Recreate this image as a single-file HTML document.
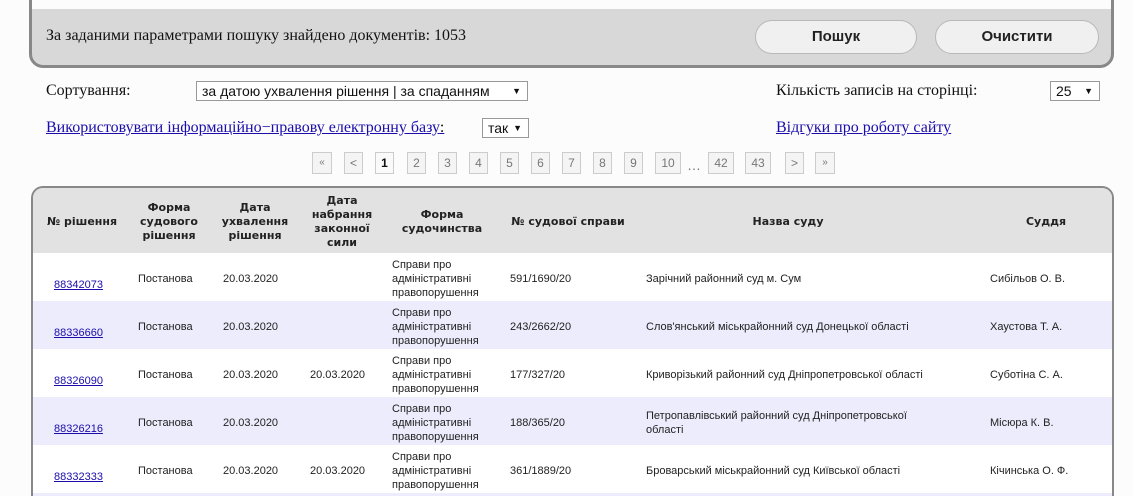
<!DOCTYPE html>
<html><head><meta charset="utf-8"><style>
*{margin:0;padding:0;box-sizing:border-box}
html,body{width:1133px;height:496px;overflow:hidden}
body{background:#fcfcfc;position:relative;font-family:"Liberation Serif",serif;color:#111}
.a{position:absolute}
.panel{left:29px;top:-20px;width:1085px;height:88px;border:3px solid #888;border-radius:0 0 14px 14px;background:#d8d8d8;overflow:hidden}
.panel .w{position:absolute;left:0;top:0;right:0;height:26px;background:#fcfcfc}
.btn{top:20px;height:34px;border:1px solid #b8b8b8;border-radius:17px;background:#f0f0f0;font:bold 15px "Liberation Sans",sans-serif;text-align:center;line-height:32px;color:#222}
.sel{border:1px solid #999;background:#fff;font:14px "Liberation Sans",sans-serif;padding-left:5px;line-height:18px;color:#111}
.sel span{position:absolute;right:6px;top:0;font-size:9px}
a,.lnk{color:#1a0dab;text-decoration:underline}
.t{font-size:16px}
.pg{top:152px;height:22px;border:1px solid #ccc;background:#f4f4f4;font:12px "Liberation Sans",sans-serif;color:#777;text-align:center;line-height:20px}
.tbl{left:31px;top:186px;width:1083px;height:310px;border:2px solid #888;border-bottom:0;border-radius:12px 12px 0 0;overflow:hidden;background:#fff}
.in{position:absolute;left:-2px;top:-2px;width:1083px;height:310px}
.hd{position:absolute;left:0;top:0;right:0;height:67px;background:#e2e2e2}
.r{position:absolute;left:0;right:0;height:48px}
.alt{background:#ececfc}
.h{font:bold 11px "DejaVu Sans",sans-serif;text-align:center;line-height:14px;color:#222;position:absolute;transform:translateX(-50%);white-space:nowrap}
.c{font:11px "Liberation Sans",sans-serif;color:#222;position:absolute;line-height:14px;white-space:nowrap}
</style></head><body>
<div class="a panel"><div class="w"></div></div>
<div class="a t" style="left:46px;top:27px">За заданими параметрами пошуку знайдено документів: 1053</div>
<div class="a btn" style="left:755px;width:162px">Пошук</div>
<div class="a btn" style="left:935px;width:164px">Очистити</div>

<div class="a t" style="left:46px;top:82px">Сортування:</div>
<div class="a sel" style="left:196px;top:81px;width:332px;height:20px">за датою ухвалення рішення | за спаданням<span>▼</span></div>
<div class="a t" style="left:776px;top:82px">Кількість записів на сторінці:</div>
<div class="a sel" style="left:1050px;top:81px;width:50px;height:20px">25<span>▼</span></div>
<div class="a lnk t" style="left:46px;top:119px">Використовувати інформаційно−правову електронну базу<span style="color:#111;text-decoration:none">:</span></div>
<div class="a sel" style="left:482px;top:118px;width:47px;height:20px">так<span>▼</span></div>
<div class="a lnk t" style="left:776px;top:119px">Відгуки про роботу сайту</div>

<div class="a pg" style="left:312px;width:20px;font-size:10px">«</div>
<div class="a pg" style="left:344px;width:19px">&lt;</div>
<div class="a pg" style="left:375px;width:19px;color:#111;font-weight:bold;background:#fafafa">1</div>
<div class="a pg" style="left:407px;width:19px">2</div>
<div class="a pg" style="left:438px;width:19px">3</div>
<div class="a pg" style="left:469px;width:19px">4</div>
<div class="a pg" style="left:500px;width:19px">5</div>
<div class="a pg" style="left:531px;width:19px">6</div>
<div class="a pg" style="left:562px;width:19px">7</div>
<div class="a pg" style="left:593px;width:19px">8</div>
<div class="a pg" style="left:624px;width:19px">9</div>
<div class="a pg" style="left:655px;width:26px">10</div>
<div class="a" style="left:687px;top:157px;font:14px 'Liberation Sans',sans-serif;color:#777">…</div>
<div class="a pg" style="left:708px;width:26px">42</div>
<div class="a pg" style="left:745px;width:26px">43</div>
<div class="a pg" style="left:785px;width:19px">&gt;</div>
<div class="a pg" style="left:815px;width:20px;font-size:10px">»</div>

<div class="a tbl"><div class="in">
<div class="hd"></div>
<div class="h" style="left:51px;top:29px">№ рішення</div>
<div class="h" style="left:138px;top:15px">Форма<br>судового<br>рішення</div>
<div class="h" style="left:224px;top:15px">Дата<br>ухвалення<br>рішення</div>
<div class="h" style="left:311px;top:8px">Дата<br>набрання<br>законної<br>сили</div>
<div class="h" style="left:411px;top:22px">Форма<br>судочинства</div>
<div class="h" style="left:537px;top:29px">№ судової справи</div>
<div class="h" style="left:757px;top:29px">Назва суду</div>
<div class="h" style="left:1015px;top:29px">Суддя</div>

<div class="r" style="top:67px"></div>
<div class="r alt" style="top:115px"></div>
<div class="r" style="top:163px"></div>
<div class="r alt" style="top:211px"></div>
<div class="r" style="top:259px"></div>
<div class="r alt" style="top:307px;height:4px"></div>

<a class="c" style="left:23px;top:92px;color:#1a0dab">88342073</a>
<div class="c" style="left:107px;top:86px">Постанова</div>
<div class="c" style="left:192px;top:86px">20.03.2020</div>
<div class="c" style="left:361px;top:72px">Справи про<br>адміністративні<br>правопорушення</div>
<div class="c" style="left:479px;top:86px">591/1690/20</div>
<div class="c" style="left:615px;top:86px">Зарічний районний суд м. Сум</div>
<div class="c" style="left:959px;top:86px">Сибільов О. В.</div>

<a class="c" style="left:23px;top:140px;color:#1a0dab">88336660</a>
<div class="c" style="left:107px;top:134px">Постанова</div>
<div class="c" style="left:192px;top:134px">20.03.2020</div>
<div class="c" style="left:361px;top:120px">Справи про<br>адміністративні<br>правопорушення</div>
<div class="c" style="left:479px;top:134px">243/2662/20</div>
<div class="c" style="left:615px;top:134px">Слов'янський міськрайонний суд Донецької області</div>
<div class="c" style="left:959px;top:134px">Хаустова Т. А.</div>

<a class="c" style="left:23px;top:188px;color:#1a0dab">88326090</a>
<div class="c" style="left:107px;top:182px">Постанова</div>
<div class="c" style="left:192px;top:182px">20.03.2020</div>
<div class="c" style="left:279px;top:182px">20.03.2020</div>
<div class="c" style="left:361px;top:168px">Справи про<br>адміністративні<br>правопорушення</div>
<div class="c" style="left:479px;top:182px">177/327/20</div>
<div class="c" style="left:615px;top:182px">Криворізький районний суд Дніпропетровської області</div>
<div class="c" style="left:959px;top:182px">Суботіна С. А.</div>

<a class="c" style="left:23px;top:236px;color:#1a0dab">88326216</a>
<div class="c" style="left:107px;top:230px">Постанова</div>
<div class="c" style="left:192px;top:230px">20.03.2020</div>
<div class="c" style="left:361px;top:216px">Справи про<br>адміністративні<br>правопорушення</div>
<div class="c" style="left:479px;top:230px">188/365/20</div>
<div class="c" style="left:615px;top:223px">Петропавлівський районний суд Дніпропетровської<br>області</div>
<div class="c" style="left:959px;top:230px">Місюра К. В.</div>

<a class="c" style="left:23px;top:284px;color:#1a0dab">88332333</a>
<div class="c" style="left:107px;top:278px">Постанова</div>
<div class="c" style="left:192px;top:278px">20.03.2020</div>
<div class="c" style="left:279px;top:278px">20.03.2020</div>
<div class="c" style="left:361px;top:264px">Справи про<br>адміністративні<br>правопорушення</div>
<div class="c" style="left:479px;top:278px">361/1889/20</div>
<div class="c" style="left:615px;top:278px">Броварський міськрайонний суд Київської області</div>
<div class="c" style="left:959px;top:278px">Кічинська О. Ф.</div>
</div></div>
</body></html>
